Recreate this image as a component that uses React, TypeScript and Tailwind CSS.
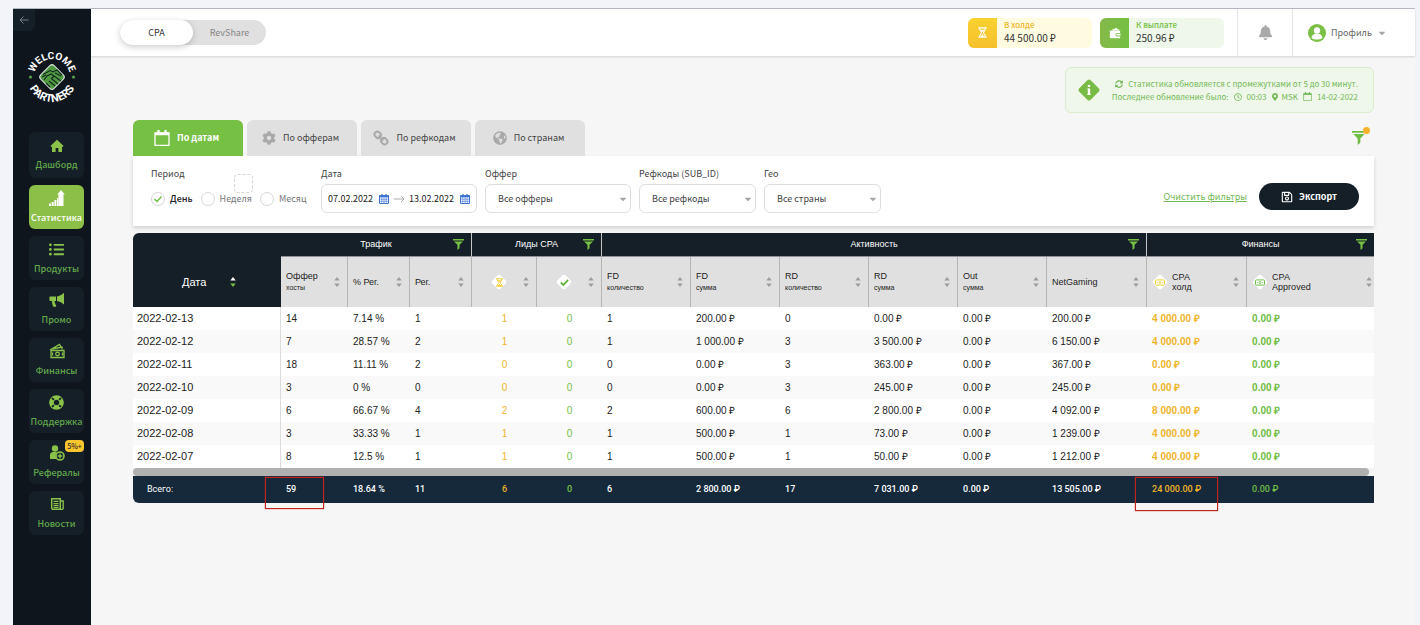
import React, { useState } from "react";
import {
  FaBell,
  FaCaretDown,
  FaCog,
  FaGlobeAmericas,
  FaLifeRing,
  FaListUl,
  FaMapMarkerAlt,
  FaRegClock,
  FaRegSave,
  FaSyncAlt,
} from "react-icons/fa";

const HomeIcon = () => (
  <svg viewBox="0 0 14 14" className="w-[14px] h-[14px]" fill="currentColor">
    <path d="M7 .8l6.600 6.200-.9 1L12 7.400V13H8.400V9H5.600v4H2V7.400l-.7.6-.9-1z" />
  </svg>
);

const GrowthIcon = () => (
  <svg viewBox="0 0 16 16" className="w-4 h-4" fill="currentColor">
    <path d="M0 13.500h2V16H0zM2.700 12h2v4h-2zM5.400 10h2v6h-2zM8 8h1.500v8H8z" />
    <path d="M12 0l3.800 4.500H14.500V16h-5V4.500H8.300z" />
  </svg>
);

const PromoIcon = () => (
  <svg viewBox="0 0 16 16" className="w-4 h-4" fill="currentColor">
    <path d="M15 .8v11.700C12.500 10.500 10.500 9.300 8 9V4.500C10.500 4 12.500 3 15 .8z" />
    <path d="M1.500 4.500H7V9H5.600c.1 1.800.6 3 1.600 4.500l-.4 1.300H4.300C3.500 13 3 11 3 9H1.500C.8 9 .4 8.500.4 8V5.500c0-.6.4-1 1.100-1z" />
  </svg>
);

const CashIcon = () => (
  <svg viewBox="0 0 16 16" className="w-4 h-4" fill="none" stroke="currentColor" strokeWidth="1.300">
    <path d="M1 7l9.500-5.500L12 4M3 6l10-2v2.500" />
    <path d="M2 7.500h13v7H2z" />
    <circle cx="8.500" cy="11" r="1.800" />
    <path d="M3.500 9.500v3M13.500 9.500v3" />
  </svg>
);

const ReferralIcon = () => (
  <svg viewBox="0 0 16 16" className="w-4 h-4" fill="currentColor">
    <circle cx="6" cy="3.500" r="3.200" />
    <path d="M1 14V10c0-2 1.500-3 3.200-3H8c-1.500 1.400-2 4.600 0 7z" />
    <circle cx="11" cy="11" r="4" fill="none" stroke="currentColor" strokeWidth="1.600" />
    <path d="M10.300 8.600h1.400v1.700h1.700v1.400h-1.700v1.700h-1.400v-1.700H8.600v-1.400h1.700z" />
  </svg>
);

const NewsIcon = () => (
  <svg viewBox="0 0 16 16" className="w-4 h-4" fill="none" stroke="currentColor">
    <path d="M2.700 2.700h8.600v10.600H3.500l-.8-.8z" strokeWidth="1.500" />
    <path d="M11.500 5h2.700v7.500l-.8.8h-2" strokeWidth="1.300" />
    <path d="M4.500 5.300h5M4.500 7.600h5M4.500 9.600h5M4.500 11.500h5" strokeWidth="1.200" />
  </svg>
);

const HourglassIcon = ({ className }: { className: string }) => (
  <svg viewBox="0 0 12 12" className={className} fill="none" stroke="currentColor" strokeWidth="1.200">
    <path d="M1.500 1h9M1.500 11h9" />
    <path d="M2.700 1c0 3 2.300 3.500 2.300 5s-2.300 2-2.300 5M9.300 1c0 3-2.300 3.500-2.300 5s2.300 2 2.300 5" />
    <path d="M4 3h4L6 5.500zM3.800 10.500L6 8l2.200 2.500z" fill="currentColor" stroke="none" />
  </svg>
);

const WalletIcon = () => (
  <svg viewBox="0 0 14 14" className="w-3 h-3" fill="currentColor">
    <path d="M1.500 4L9 1l1 2H12v1.500z" />
    <path d="M1 4.500h12V7H9.500a1.500 1.500 0 0 0 0 4H13v2H2a1 1 0 0 1-1-1z" />
    <path d="M9.500 8H13.500v2h-4a1 1 0 0 1 0-2z" />
  </svg>
);

const ProfileIcon = () => (
  <svg viewBox="0 0 18 18" className="w-[18px] h-[18px]">
    <circle cx="9" cy="9" r="9" fill="#7bbf45" />
    <circle cx="9" cy="6.500" r="3.200" fill="#fff" />
    <path d="M3.500 14c.3-2.600 2-3.700 3.700-4.200h3.600c1.700.5 3.400 1.600 3.700 4.200-3 2-8 2-11 0z" fill="#fff" />
  </svg>
);

const FunnelIcon = ({ className }: { className: string }) => (
  <svg viewBox="0 0 16 16" className={className} fill="currentColor">
    <path d="M0 0h16v2H0zM1.500 3.500h13l-5 5v5L6.500 16V8.500z" />
  </svg>
);

const CalendarIcon = ({ className }: { className: string }) => (
  <svg viewBox="0 0 16 16" className={className} fill="none" stroke="currentColor">
    <path d="M1 3h14v12.300H1z" strokeWidth="1.300" />
    <path d="M1 4h14" strokeWidth="2.500" />
    <path d="M4.500 0v4M11.500 0v4" strokeWidth="2.200" />
  </svg>
);

const DatePickerIcon = () => (
  <svg viewBox="0 0 10 10" className="w-[10px] h-[10px] shrink-0 text-[#3f74d1]" fill="none" stroke="currentColor">
    <path d="M.5 1.500h9v8h-9z" />
    <path d="M.5 2.500h9" strokeWidth="1.600" />
    <path d="M3 0v2M7 0v2" strokeWidth="1.300" />
    <path d="M.5 5.200h9M.5 7.300h9M2.800 3v6M5 3v6M7.200 3v6" strokeWidth=".6" />
  </svg>
);

const ChainIcon = () => (
  <svg viewBox="0 0 16 16" className="w-4 h-4" fill="none" stroke="currentColor" strokeWidth="2">
    <rect x="1.500" y="2" width="6.500" height="5.500" rx="2.600" transform="rotate(45 4.700 4.700)" />
    <rect x="8" y="8.500" width="6.500" height="5.500" rx="2.600" transform="rotate(45 11.300 11.300)" />
    <path d="M5.500 5.500l5 5" strokeWidth="1.600" />
  </svg>
);

const Sorter = () => (
  <svg viewBox="0 0 6 10" className="w-[6px] h-[10px] shrink-0 text-[#9b9b9b]" fill="currentColor">
    <path d="M3 0l2.700 3.600H.3zM3 10l2.700-3.600H.3z" />
  </svg>
);

const Diamond = ({ children }: { children: React.ReactNode }) => (
  <span className="relative w-4 h-4 shrink-0 flex items-center justify-center">
    <svg viewBox="0 0 16 16" className="absolute inset-0 w-4 h-4" fill="#fff">
      <rect x="2.300" y="2.300" width="11.400" height="11.400" rx="2" transform="rotate(45 8 8)" />
    </svg>
    <span className="relative flex">{children}</span>
  </span>
);

const BillIcon = () => (
  <svg viewBox="0 0 12 8" className="w-[10px] h-[7px]" fill="none" stroke="currentColor">
    <rect x="0.600" y="0.900" width="10.800" height="6.200" rx="1" strokeWidth="1.200" />
    <circle cx="6" cy="4" r="1.200" />
    <path d="M2.800 3.300v1.400M9.200 3.300v1.400" />
  </svg>
);

const Logo = () => (
  <svg viewBox="0 0 56 56" className="w-14 h-14">
    <defs>
      <path id="arcTop" d="M10 28a18 18 0 0 1 36 0" />
      <path id="arcBottom" d="M3 28a25 25 0 0 0 50 0" />
    </defs>
    <g fill="#fff" fontFamily="Roboto, sans-serif" fontWeight="700" fontSize="10" textAnchor="middle">
      <text>
        <textPath href="#arcTop" startOffset="50%">WELCOME</textPath>
      </text>
      <text fontSize="11">
        <textPath href="#arcBottom" startOffset="50%">PARTNERS</textPath>
      </text>
    </g>
    <circle cx="6.500" cy="28" r="1.500" fill="#5aa646" />
    <circle cx="49.500" cy="28" r="1.500" fill="#5aa646" />
    <rect x="18.500" y="18.500" width="19" height="19" rx="3" transform="rotate(45 28 28)" fill="#4f9a41" stroke="#dfe6e2" />
    <g fill="none" stroke="#14281f" strokeWidth="1.100">
      <path d="M19 25.500l7-4 3 1.500 4-2 5 5M18 28l4-2M20 31l3-4 4-2 3 2-3 3M30 27l7 5M28 30l6 5M25 32l6 5M22 34l4 4M31 24l6 3" />
    </g>
  </svg>
);

const nav = [
  { label: "Дашборд", icon: <HomeIcon /> },
  { label: "Статистика", icon: <GrowthIcon />, active: true },
  { label: "Продукты", icon: <FaListUl className="w-[15px] h-[15px]" /> },
  { label: "Промо", icon: <PromoIcon /> },
  { label: "Финансы", icon: <CashIcon /> },
  { label: "Поддержка", icon: <FaLifeRing className="w-[15px] h-[15px]" /> },
  { label: "Рефералы", icon: <ReferralIcon />, badge: "5%+" },
  { label: "Новости", icon: <NewsIcon /> },
];

const tabs = [
  { id: "dates", label: "По датам", icon: <CalendarIcon className="w-4 h-4" /> },
  { id: "offers", label: "По офферам", icon: <FaCog className="w-[14px] h-[14px]" /> },
  { id: "refcodes", label: "По рефкодам", icon: <ChainIcon /> },
  { id: "countries", label: "По странам", icon: <FaGlobeAmericas className="w-[14px] h-[14px]" /> },
];

const rows = [
  ["2022-02-13", "14", "7.14 %", "1", "1", "0", "1", "200.00 ₽", "0", "0.00 ₽", "0.00 ₽", "200.00 ₽", "4 000.00 ₽", "0.00 ₽"],
  ["2022-02-12", "7", "28.57 %", "2", "1", "0", "1", "1 000.00 ₽", "3", "3 500.00 ₽", "0.00 ₽", "6 150.00 ₽", "4 000.00 ₽", "0.00 ₽"],
  ["2022-02-11", "18", "11.11 %", "2", "0", "0", "0", "0.00 ₽", "3", "363.00 ₽", "0.00 ₽", "367.00 ₽", "0.00 ₽", "0.00 ₽"],
  ["2022-02-10", "3", "0 %", "0", "0", "0", "0", "0.00 ₽", "3", "245.00 ₽", "0.00 ₽", "245.00 ₽", "0.00 ₽", "0.00 ₽"],
  ["2022-02-09", "6", "66.67 %", "4", "2", "0", "2", "600.00 ₽", "6", "2 800.00 ₽", "0.00 ₽", "4 092.00 ₽", "8 000.00 ₽", "0.00 ₽"],
  ["2022-02-08", "3", "33.33 %", "1", "1", "0", "1", "500.00 ₽", "1", "73.00 ₽", "0.00 ₽", "1 239.00 ₽", "4 000.00 ₽", "0.00 ₽"],
  ["2022-02-07", "8", "12.5 %", "1", "1", "0", "1", "500.00 ₽", "1", "50.00 ₽", "0.00 ₽", "1 212.00 ₽", "4 000.00 ₽", "0.00 ₽"],
];

const totals = ["Всего:", "59", "18.64 %", "11", "6", "0", "6", "2 800.00 ₽", "17", "7 031.00 ₽", "0.00 ₽", "13 505.00 ₽", "24 000.00 ₽", "0.00 ₽"];

const groups = [
  { label: "Трафик", span: 3 },
  { label: "Лиды CPA", span: 2 },
  { label: "Активность", span: 6 },
  { label: "Финансы", span: 2 },
];

const columns: { title?: string; sub?: string; icon?: React.ReactNode }[] = [
  { title: "Оффер", sub: "хосты" },
  { title: "% Рег." },
  { title: "Рег." },
  { icon: <HourglassIcon className="w-[9px] h-[9px] text-[#f2c81f]" /> },
  {
    icon: (
      <svg viewBox="0 0 10 10" className="w-[9px] h-[9px]" fill="none" stroke="#5fb336" strokeWidth="2">
        <path d="M1 5l2.800 2.800L9 2" />
      </svg>
    ),
  },
  { title: "FD", sub: "количество" },
  { title: "FD", sub: "сумма" },
  { title: "RD", sub: "количество" },
  { title: "RD", sub: "сумма" },
  { title: "Out", sub: "сумма" },
  { title: "NetGaming" },
];

// "hold" columns are amber, "approved" ones green
function cellStyle(i: number) {
  if (i === 4) return "text-center text-[#f0b429]";
  if (i === 5) return "text-center text-[#76c043]";
  if (i === 12) return "pl-[5px] font-bold text-[#f0b429]";
  if (i === 13) return "pl-[5px] font-bold text-[#6fbd44]";
  return "pl-[5px]";
}

function Picker({ id, label, option, width }: { id: string; label: string; option: string; width: string }) {
  return (
    <div className={width}>
      <label htmlFor={id} className="block h-4 leading-4 whitespace-nowrap">{label}</label>
      <div className="relative mt-[2px]">
        <select id={id} className="w-full h-[29px] appearance-none rounded-md border border-[#dedede] bg-white pl-3 text-[9px] text-[#444]">
          <option>{option}</option>
        </select>
        <FaCaretDown className="absolute right-[3px] top-[10px] w-[10px] h-[10px] text-[#a5a5a5] pointer-events-none" />
      </div>
    </div>
  );
}

export default function App() {
  const [program, setProgram] = useState("CPA");
  const [tab, setTab] = useState("dates");
  const [period, setPeriod] = useState("День");

  return (
    <div className="min-h-screen flex flex-col bg-[#f2f4f9] pl-[13px] pr-[5px] pt-2 font-['Noto_Sans_CJK_SC','Noto_Sans',sans-serif] text-[9px] text-[#444]">
      <div className="flex-1 flex border-t border-[#b6bac3] bg-[#f6f6f6]">
        {/* Sidebar */}
        <aside className="w-[78px] shrink-0 bg-[#0e151c]">
          <button aria-label="Свернуть" className="w-[22px] h-[22px] rounded-br-md bg-[#151f28] flex items-center justify-center text-[#76818a]">
            <svg viewBox="0 0 10 10" className="w-[10px] h-[10px]" fill="none" stroke="currentColor">
              <path d="M9.500 5H1M4.500 1.500L1 5l3.500 3.500" />
            </svg>
          </button>
          <a href="#" aria-label="Welcome Partners" className="flex justify-center mt-[18px]">
            <Logo />
          </a>
          <nav className="mt-[27px] pl-4 pr-[7px] flex flex-col gap-[7px]">
            {nav.map((item) => (
              <a
                key={item.label}
                href="#"
                className={`relative h-11 first:h-[46px] pt-[2px] rounded-md flex flex-col items-center justify-center gap-1 font-medium ${
                  item.active ? "bg-[#8cbf47] text-white" : "bg-[#151f28] text-[#62a84a]"
                }`}
              >
                <span className={item.active ? "text-white" : "text-[#8bc34a]"}>{item.icon}</span>
                <span className="leading-4">{item.label}</span>
                {item.badge && (
                  <span className="absolute right-0 top-0 h-3 w-[19px] rounded-sm bg-[#fbc62d] text-[7px] leading-3 text-center text-[#222]">
                    {item.badge}
                  </span>
                )}
              </a>
            ))}
          </nav>
        </aside>

        <div className="flex-1 min-w-0">
          {/* Top bar */}
          <header className="h-[47px] bg-white flex items-center pl-[29px] shadow-[0_1px_2px_rgba(0,0,0,0.15)]">
            <div className="flex h-[25px] w-[146px] rounded-full bg-[#e0e0e0]">
              {["CPA", "RevShare"].map((name) => (
                <button
                  key={name}
                  onClick={() => setProgram(name)}
                  className={`w-[73px] rounded-full ${program === name ? "bg-white text-[#333] shadow-[0_2px_6px_rgba(0,0,0,0.2)]" : "text-[#858585]"}`}
                >
                  {name}
                </button>
              ))}
            </div>

            <div className="ml-auto h-full flex items-center">
              <div className="w-[124px] h-[30px] rounded-md overflow-hidden flex bg-[#fefbe0]">
                <span className="w-[29px] flex items-center justify-center bg-linear-to-b from-[#fad22f] to-[#f5c02c] text-white">
                  <HourglassIcon className="w-[11px] h-[11px]" />
                </span>
                <div className="pl-[7px] pt-px">
                  <div className="text-[8px] leading-3 font-medium text-[#f0b429]">В холде</div>
                  <div className="text-[10px] leading-[14px] text-[#333]">44 500.00 ₽</div>
                </div>
              </div>
              <div className="ml-2 w-[124px] h-[30px] rounded-md overflow-hidden flex bg-[#eef7e9]">
                <span className="w-[29px] flex items-center justify-center bg-linear-to-r from-[#85b94a] to-[#74c043] text-white">
                  <WalletIcon />
                </span>
                <div className="pl-[7px] pt-px">
                  <div className="text-[8px] leading-3 font-medium text-[#73bf43]">К выплате</div>
                  <div className="text-[10px] leading-[14px] text-[#333]">250.96 ₽</div>
                </div>
              </div>
              <button aria-label="Уведомления" className="ml-[13px] w-14 h-full border-x border-[#e4e4e4] flex items-center justify-center text-[#a9a9a9]">
                <FaBell className="w-[15px] h-[15px]" />
              </button>
              <button className="w-[122px] h-full pl-[15px] flex items-center text-[#666]">
                <ProfileIcon />
                <span className="ml-[5px]">Профиль</span>
                <FaCaretDown className="ml-[5px] w-[10px] h-[10px] text-[#a5a5a5]" />
              </button>
            </div>
          </header>

          <main className="pl-[42px] pr-[41px] pt-[11px]">
            <div className="ml-auto w-[309px] h-[46px] rounded-md border border-[#d9edcd] bg-[#eff7ea] flex items-center pl-[11px] pr-[15px] text-[8px] text-[#72b955]">
              <svg viewBox="0 0 24 24" className="w-6 h-6 shrink-0">
                <rect x="4" y="4" width="16" height="16" rx="2" transform="rotate(45 12 12)" fill="#78bb45" />
                <path d="M12 10.500v6M12 7v2" stroke="#fff" strokeWidth="2.400" />
                <path d="M10.500 11h1.500M10.300 16.500h3.400" stroke="#fff" />
              </svg>
              <div className="flex-1 flex flex-col items-end leading-[13px] whitespace-nowrap">
                <div className="flex items-center gap-[5px]">
                  <FaSyncAlt className="w-2 h-2" />
                  Статистика обновляется с промежутками от 5 до 30 минут.
                </div>
                <div className="flex items-center gap-[5px]">
                  Последнее обновление было:
                  <FaRegClock className="w-2 h-2" />
                  <span>00:03</span>
                  <span className="flex items-center gap-[2px]">
                    <FaMapMarkerAlt className="w-2 h-2" />
                    MSK
                  </span>
                  <CalendarIcon className="w-[9px] h-[9px]" />
                  <span>14-02-2022</span>
                </div>
              </div>
            </div>

            {/* Report tabs */}
            <div className="mt-[7px] flex items-center justify-between">
              <div className="flex gap-1">
                {tabs.map((t) => (
                  <button
                    key={t.id}
                    onClick={() => setTab(t.id)}
                    className={`w-[110px] h-9 pr-[3px] rounded-t-md flex items-center justify-center gap-[7px] ${
                      tab === t.id ? "bg-[#76c043] text-white font-bold" : "bg-[#e0e0e0] text-[#444]"
                    }`}
                  >
                    <span className={tab === t.id ? "text-white" : "text-[#a9a9a9]"}>{t.icon}</span>
                    {t.label}
                  </button>
                ))}
              </div>
              <button aria-label="Фильтр" className="relative mr-2 text-[#6fbd44]">
                <FunnelIcon className="w-[14px] h-[14px]" />
                <span className="absolute -top-[4px] -right-[4px] w-[7px] h-[7px] rounded-full bg-[#f5b32c]" />
              </button>
            </div>

            {/* Filters */}
            <div className="h-[70px] bg-white shadow-[0_2px_4px_rgba(0,0,0,0.15)] flex items-start gap-2 pl-[18px] pr-[15px] pt-[10px]">
              <div className="relative w-[162px]">
                <fieldset>
                  <legend className="h-4 leading-4">Период</legend>
                  <div className="mt-[2px] h-[29px] flex items-center gap-2">
                    {["День", "Неделя", "Месяц"].map((p) => (
                      <label key={p} className={`relative flex items-center gap-[5px] ${period === p ? "text-[#222] font-medium" : "text-[#777]"}`}>
                        <input
                          type="radio"
                          name="period"
                          checked={period === p}
                          onChange={() => setPeriod(p)}
                          className="appearance-none w-[14px] h-[14px] rounded-full border border-[#d6d6d6] bg-white"
                        />
                        {period === p && (
                          <svg viewBox="0 0 8 8" className="absolute left-[3px] inset-y-0 my-auto w-2 h-2 pointer-events-none" fill="none" stroke="#6fbd44" strokeWidth="1.400">
                            <path d="M.5 4L3 6.500 7.500 1.500" />
                          </svg>
                        )}
                        {p}
                      </label>
                    ))}
                  </div>
                </fieldset>
                <span className="absolute left-[83px] top-2 w-[19px] h-[19px] rounded-sm border border-dashed border-[#d5d5d5]" />
              </div>

              <fieldset className="w-[156px]">
                <legend className="h-4 leading-4">Дата</legend>
                <div className="mt-[2px] h-[29px] rounded-md border border-[#dedede] flex items-center justify-center gap-1 text-[#222]">
                  <input aria-label="Дата с" defaultValue="07.02.2022" className="w-[47px] bg-transparent" />
                  <DatePickerIcon />
                  <svg viewBox="0 0 12 8" className="w-3 h-2 shrink-0 text-[#aaa]" fill="none" stroke="currentColor">
                    <path d="M1 4h10M8 1l3 3-3 3" />
                  </svg>
                  <input aria-label="Дата по" defaultValue="13.02.2022" className="w-[47px] bg-transparent" />
                  <DatePickerIcon />
                </div>
              </fieldset>

              <Picker id="offer" label="Оффер" option="Все офферы" width="w-[146px]" />
              <Picker id="refcode" label="Рефкоды (SUB_ID)" option="Все рефкоды" width="w-[117px]" />
              <Picker id="geo" label="Гео" option="Все страны" width="w-[117px]" />

              <div className="ml-auto mt-[17px] flex items-center gap-3">
                <a href="#" className="underline text-[#72b955]">Очистить фильтры</a>
                <button className="w-[100px] h-[27px] rounded-full bg-[#151f28] text-white font-bold flex items-center justify-center gap-[6px]">
                  <FaRegSave className="w-3 h-3" />
                  Экспорт
                </button>
              </div>
            </div>

            {/* Statistics */}
            <table className="mt-[7px] w-full table-fixed border-separate border-spacing-0 text-left text-[10px] text-[#222] font-['Liberation_Sans',sans-serif]">
              <colgroup>
                <col className="w-[148px]" />
                <col className="w-[67px]" />
                <col className="w-[62px]" />
                <col className="w-[62px]" />
                <col className="w-[65px]" />
                <col className="w-[65px]" />
                <col className="w-[89px]" />
                <col className="w-[89px]" />
                <col className="w-[89px]" />
                <col className="w-[89px]" />
                <col className="w-[89px]" />
                <col className="w-[100px]" />
                <col className="w-[100px]" />
                <col />
              </colgroup>
              <thead className="text-[9px]">
                <tr className="h-6 text-white">
                  <th rowSpan={2} className="rounded-tl-md bg-[#151f28] align-bottom pb-[17px] text-[11px] font-medium">
                    <span className="flex items-center pl-[49px] gap-6">
                      Дата
                      <svg viewBox="0 0 6 10" className="w-[6px] h-[10px]">
                        <path d="M3 0l2.700 3.600H.3z" fill="#fff" />
                        <path d="M3 10l2.700-3.600H.3z" fill="#76c043" />
                      </svg>
                    </span>
                  </th>
                  {groups.map((g, i) => (
                    <th key={g.label} colSpan={g.span} className={`bg-[#151f28] border-b border-[#8d9298] font-medium p-0 ${i < 3 ? "border-r border-r-[#c4c6c8]" : ""}`}>
                      <span className="grid grid-cols-[18px_1fr_18px] items-center text-center">
                        <span className="col-start-2">{g.label}</span>
                        <FunnelIcon className="w-[11px] h-[11px] text-[#76c043]" />
                      </span>
                    </th>
                  ))}
                </tr>
                <tr className="h-[50px] bg-[#e0e0e0]">
                  {columns.map((c, i) => (
                    <th key={i} className="pl-[5px] pr-[7px] font-normal border-r border-[#b5b5b5]">
                      <span className="flex items-center justify-between leading-3">
                        {c.icon ? (
                          <span className="pl-[14px]"><Diamond>{c.icon}</Diamond></span>
                        ) : (
                          <span>
                            {c.title}
                            {c.sub && <small className="block text-[7px] leading-3">{c.sub}</small>}
                          </span>
                        )}
                        <Sorter />
                      </span>
                    </th>
                  ))}
                  <th className="pl-[5px] pr-[7px] font-normal border-r border-[#b5b5b5]">
                    <span className="flex items-center gap-1 leading-[10px]">
                      <Diamond><span className="text-[#f0cf2c]"><BillIcon /></span></Diamond>
                      <span className="flex-1">CPA<br />холд</span>
                      <Sorter />
                    </span>
                  </th>
                  <th className="pl-[5px] pr-[2px] font-normal">
                    <span className="flex items-center gap-1 leading-[10px]">
                      <Diamond><span className="text-[#6fbd44]"><BillIcon /></span></Diamond>
                      <span className="flex-1">CPA<br />Approved</span>
                      <Sorter />
                    </span>
                  </th>
                </tr>
              </thead>
              <tbody>
                {rows.map((row) => (
                  <tr key={row[0]} className="h-[23px] bg-white even:bg-[#f9f9f9]">
                    {row.map((value, i) =>
                      i === 0 ? (
                        <th key={i} scope="row" className="pl-1 text-[11px] font-normal border-r border-[#dcdcdc]">{value}</th>
                      ) : (
                        <td key={i} className={cellStyle(i)}>{value}</td>
                      )
                    )}
                  </tr>
                ))}
                <tr>
                  <td colSpan={14} className="p-0 pr-[5px] bg-[#f4f4f4]">
                    <div className="h-2 rounded-full bg-[#b0b0b0]" />
                  </td>
                </tr>
              </tbody>
              <tfoot className="text-[9px] text-white font-['Roboto',sans-serif]">
                <tr className="h-[27px]">
                  {totals.map((value, i) =>
                    i === 0 ? (
                      <th key={i} scope="row" className="pl-[14px] font-normal bg-[#15293b] rounded-bl-md">{value}</th>
                    ) : (
                      <td key={i} className={`relative bg-[#15293b] font-medium ${cellStyle(i)}`}>
                        {value}
                        {i === 1 && <span className="absolute z-10 -left-4 top-px w-[59px] h-8 border border-[#c0241c] shadow-[0_0_1px_#c0241c]" />}
                        {i === 12 && <span className="absolute z-10 -left-3 top-px w-[83px] h-[34px] border border-[#c0241c] shadow-[0_0_1px_#c0241c]" />}
                      </td>
                    )
                  )}
                </tr>
              </tfoot>
            </table>
          </main>
        </div>
      </div>
    </div>
  );
}
